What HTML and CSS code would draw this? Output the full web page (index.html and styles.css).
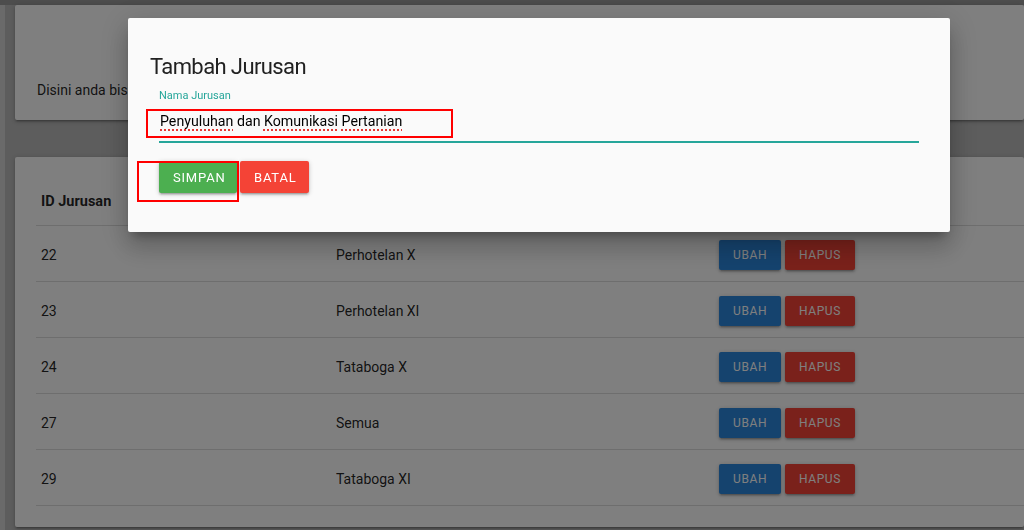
FILE: index.html
```html
<!DOCTYPE html>
<html lang="id">
<head>
<meta charset="utf-8">
<title>Jurusan</title>
<link rel="stylesheet" href="styles.css">
</head>
<body>
<div class="topstrip"></div>
<div class="layout">
  <div class="leftstrip"></div>
  <main class="page">
    <section class="card card-intro">
      <p class="intro-text">Disini anda bisa mengelola data jurusan.</p>
    </section>
    <section class="card card-table">
      <div class="table">
        <div class="row head">
          <div class="cell">ID Jurusan</div>
          <div class="cell">Nama Jurusan</div>
          <div class="cell">Aksi</div>
        </div>
        <div class="row">
          <div class="cell">22</div>
          <div class="cell">Perhotelan X</div>
          <div class="cell actions"><button class="btn btn-blue">Ubah</button><button class="btn btn-red">Hapus</button></div>
        </div>
        <div class="row">
          <div class="cell">23</div>
          <div class="cell">Perhotelan XI</div>
          <div class="cell actions"><button class="btn btn-blue">Ubah</button><button class="btn btn-red">Hapus</button></div>
        </div>
        <div class="row">
          <div class="cell">24</div>
          <div class="cell">Tataboga X</div>
          <div class="cell actions"><button class="btn btn-blue">Ubah</button><button class="btn btn-red">Hapus</button></div>
        </div>
        <div class="row">
          <div class="cell">27</div>
          <div class="cell">Semua</div>
          <div class="cell actions"><button class="btn btn-blue">Ubah</button><button class="btn btn-red">Hapus</button></div>
        </div>
        <div class="row">
          <div class="cell">29</div>
          <div class="cell">Tataboga XI</div>
          <div class="cell actions"><button class="btn btn-blue">Ubah</button><button class="btn btn-red">Hapus</button></div>
        </div>
      </div>
    </section>
  </main>
</div>

<div class="overlay"></div>

<div class="modal">
  <h4 class="modal-title">Tambah Jurusan</h4>
  <div class="field">
    <label class="field-label">Nama Jurusan</label>
    <div class="field-input"><span class="typo">Penyuluhan</span> dan <span class="typo">Komunikasi</span> <span class="typo">Pertanian</span></div>
  </div>
  <div class="modal-actions">
    <button class="btn btn-lg btn-green">Simpan</button>
    <button class="btn btn-lg btn-danger">Batal</button>
  </div>
</div>

<div class="mark mark-input"></div>
<div class="mark mark-button"></div>
</body>
</html>
```

FILE: styles.css
```css
* { box-sizing: border-box; }

html, body {
  margin: 0;
  height: 100%;
  overflow: hidden;
}

body {
  background: #bababa;
  font-family: Roboto, "Liberation Sans", Arial, sans-serif;
  color: rgba(0, 0, 0, 0.87);
}

.topstrip {
  height: 5px;
  background: #9a9a9a;
}

.layout {
  display: flex;
}

.leftstrip {
  width: 5px;
  flex: none;
  background: #d4d4d4;
  align-self: stretch;
  min-height: 525px;
}

.page {
  flex: 1;
  padding-left: 10px;
  display: flex;
  flex-direction: column;
  gap: 37px;
}

.card {
  background: #fff;
  border-radius: 2px;
  box-shadow: 0 2px 2px 0 rgba(0,0,0,0.14), 0 3px 1px -2px rgba(0,0,0,0.12), 0 1px 5px 0 rgba(0,0,0,0.2);
}

.card-intro {
  height: 115px;
  padding: 0 22px;
  display: flex;
  align-items: flex-end;
}

.intro-text {
  margin: 0 0 20px;
  font-size: 14px;
  line-height: 20px;
  white-space: nowrap;
}

.card-table {
  height: 370px;
  padding: 23px 0 0 21px;
}

.row {
  display: grid;
  grid-template-columns: 295px 383px 1fr;
  align-items: center;
  height: 56px;
  border-bottom: 1px solid #dcdcdc;
  font-size: 14px;
}

.row.head {
  height: 46px;
  font-weight: 700;
  font-size: 14.5px;
}

.row.head .cell {
  padding-bottom: 2px;
}

.row:not(.head) .cell {
  padding-top: 2px;
}

.cell {
  padding-left: 5px;
  white-space: nowrap;
}

.actions {
  display: flex;
  gap: 4px;
}

.btn {
  border: none;
  border-radius: 2px;
  color: #fff;
  font-family: inherit;
  font-size: 12px;
  letter-spacing: 0.6px;
  text-transform: uppercase;
  height: 30px;
  padding: 0 14px;
  box-shadow: 0 2px 2px 0 rgba(0,0,0,0.14), 0 3px 1px -2px rgba(0,0,0,0.12), 0 1px 5px 0 rgba(0,0,0,0.2);
}

.btn-blue { background: #2a86dc; width: 62px; }
.btn-red { background: #f44336; width: 70px; }

.overlay {
  position: fixed;
  inset: 0;
  background: rgba(0, 0, 0, 0.5);
}

.modal {
  position: fixed;
  top: 18px;
  left: 128px;
  width: 822px;
  height: 214px;
  background: #fafafa;
  border-radius: 2px;
  padding: 34px 22px 0;
  box-shadow: 0 16px 24px 2px rgba(0,0,0,0.14), 0 6px 30px 5px rgba(0,0,0,0.12), 0 8px 10px -5px rgba(0,0,0,0.3);
}

.modal-title {
  margin: 0;
  font-size: 22px;
  font-weight: 400;
  letter-spacing: -0.6px;
  line-height: 30px;
  color: #212121;
}

.field {
  padding: 0 9px;
  margin-top: 7px;
}

.field-label {
  display: block;
  font-size: 11px;
  line-height: 14px;
  color: #26a69a;
}

.field-input {
  margin-top: 3px;
  height: 36px;
  font-size: 14.2px;
  line-height: 30px;
  color: #000;
  border-bottom: 1px solid #26a69a;
  box-shadow: 0 1px 0 0 #26a69a;
  padding-left: 1px;
}

.typo {
  text-decoration: underline dotted #e53935;
  text-decoration-thickness: 1.5px;
  text-underline-offset: 3px;
}

.modal-actions {
  display: flex;
  gap: 3px;
  padding: 0 9px;
  margin-top: 19px;
}

.btn-lg {
  height: 32px;
  font-size: 13px;
  font-weight: 400;
  letter-spacing: 0.8px;
}

.btn-green { background: #4caf50; width: 78px; }
.btn-danger { background: #f44336; width: 69px; }

.mark {
  position: fixed;
  border: 2px solid #ff0000;
  pointer-events: none;
}

.mark-input {
  top: 109px;
  left: 146px;
  width: 307px;
  height: 29px;
}

.mark-button {
  top: 161px;
  left: 137px;
  width: 102px;
  height: 41px;
}
```
